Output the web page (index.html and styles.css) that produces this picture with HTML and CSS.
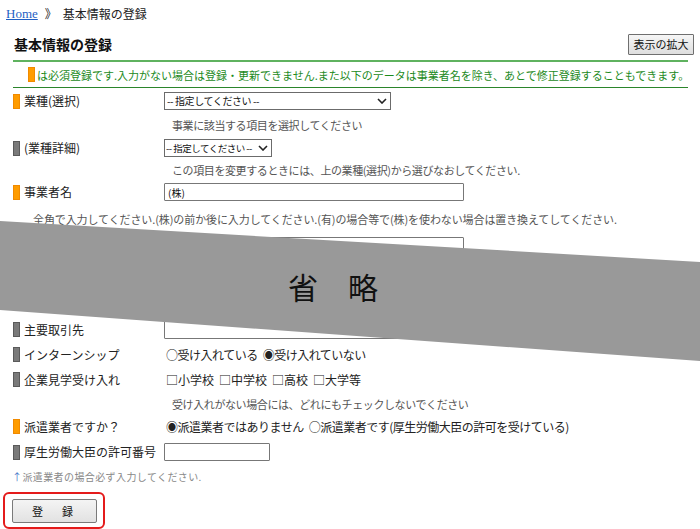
FILE: index.html
```html
<!DOCTYPE html>
<html lang="ja">
<head>
<meta charset="utf-8">
<title>基本情報の登録</title>
<link rel="stylesheet" href="styles.css">
</head>
<body>
<div class="page">
  <nav class="crumb"><a href="#" class="home">Home</a><span class="sep">》</span><span>基本情報の登録</span></nav>

  <div class="head">
    <h1 class="title">基本情報の登録</h1>
    <button class="zoom-btn" type="button">表示の拡大</button>
  </div>

  <p class="notice"><span class="mark req"></span>は必須登録です.入力がない場合は登録・更新できません.また以下のデータは事業者名を除き、あとで修正登録することもできます。</p>

  <form class="form">
    <div class="row r1">
      <div class="label"><span class="mark req"></span>業種(選択)</div>
      <div class="field">
        <span class="select-wrap w-wide"><select class="select"><option>-- 指定してください --</option></select><svg class="chev" width="10" height="6" viewBox="0 0 10 6"><path d="M1 1 L5 5 L9 1" fill="none" stroke="#222" stroke-width="1.6"/></svg></span>
      </div>
    </div>
    <div class="help h1r">事業に該当する項目を選択してください</div>
    <div class="row r2">
      <div class="label"><span class="mark opt"></span>(業種詳細)</div>
      <div class="field">
        <span class="select-wrap w-narrow"><select class="select small"><option>-- 指定してください --</option></select><svg class="chev" width="10" height="6" viewBox="0 0 10 6"><path d="M1 1 L5 5 L9 1" fill="none" stroke="#222" stroke-width="1.6"/></svg></span>
      </div>
    </div>
    <div class="help h2r">この項目を変更するときには、上の業種(選択)から選びなおしてください.</div>
    <div class="row r3">
      <div class="label"><span class="mark req"></span>事業者名</div>
      <div class="field"><input class="text w300" type="text" value="(株)"></div>
    </div>
    <div class="help wide h3r">全角で入力してください.(株)の前か後に入力してください.(有)の場合等で(株)を使わない場合は置き換えてしてください.</div>
    <div class="row r4">
      <div class="label"><span class="mark opt"></span>事業者名(カナ)</div>
      <div class="field"><input class="text w300" type="text"></div>
    </div>
    <div class="row r5">
      <div class="label"><span class="mark opt"></span>代表者名</div>
      <div class="field"><input class="text w300" type="text"></div>
    </div>
    <div class="row r6">
      <div class="label"><span class="mark opt"></span>所在地</div>
      <div class="field"><input class="text w300" type="text"></div>
    </div>
    <div class="row r7">
      <div class="label"><span class="mark opt"></span>主要取引先</div>
      <div class="field"><input class="text w300" type="text"></div>
    </div>
    <div class="row r8">
      <div class="label"><span class="mark opt"></span>インターンシップ</div>
      <div class="field choice"><span>○受け入れている</span><span>◉受け入れていない</span></div>
    </div>
    <div class="row r9">
      <div class="label"><span class="mark opt"></span>企業見学受け入れ</div>
      <div class="field choice checks"><span>□小学校</span><span>□中学校</span><span>□高校</span><span>□大学等</span></div>
    </div>
    <div class="help h4r">受け入れがない場合には、どれにもチェックしないでください</div>
    <div class="row r10">
      <div class="label"><span class="mark req"></span>派遣業者ですか？</div>
      <div class="field choice"><span>◉派遣業者ではありません</span><span>○派遣業者です(厚生労働大臣の許可を受けている)</span></div>
    </div>
    <div class="row r11">
      <div class="label"><span class="mark opt"></span>厚生労働大臣の許可番号</div>
      <div class="field"><input class="text w106" type="text"></div>
    </div>
    <p class="foot-note"><span class="arrow">↑</span>派遣業者の場合必ず入力してください.</p>
    <div class="submit-frame"><button class="submit" type="button">登　録</button></div>
  </form>

  <div class="omit"><span class="omit-text">省　略</span></div>
</div>
</body>
</html>
```

FILE: styles.css
```css
html, body {
  margin: 0;
  padding: 0;
  background: #fff;
}
body {
  font-family: "Noto Sans CJK JP", sans-serif;
  color: #222;
  width: 700px;
  height: 529px;
  overflow: hidden;
}
.page {
  position: relative;
  width: 700px;
  height: 529px;
}

/* breadcrumb */
.crumb {
  display: flex;
  align-items: center;
  height: 16px;
  padding: 6px 0 0 6px;
  font-size: 12px;
  line-height: 16px;
  color: #222;
}
.home {
  font-family: "Liberation Serif", serif;
  font-size: 13px;
  color: #1f5fc4;
  text-decoration: underline;
}
.sep {
  margin: 0 6px 0 7px;
}

/* heading */
.head {
  display: flex;
  align-items: center;
  justify-content: space-between;
  height: 28px;
  margin-top: 8px;
  padding: 0 6px 0 14px;
}
.title {
  margin: 0;
  font-size: 14px;
  line-height: 18px;
  font-weight: 700;
  color: #111;
}
.zoom-btn {
  width: 66px;
  height: 21px;
  padding: 0;
  font-family: "Noto Sans CJK JP", sans-serif;
  font-size: 11px;
  line-height: 19px;
  color: #111;
  background: linear-gradient(#f6f6f6, #dedede);
  border: 1px solid #6f6f6f;
  border-radius: 1px;
}

/* notice */
.notice {
  display: flex;
  align-items: center;
  width: 660px;
  height: 25px;
  margin: 2px 0 0 13px;
  padding: 0 0 0 15px;
  border-top: 2px solid #5fb25f;
  border-bottom: 1px solid #2b852b;
  font-size: 11px;
  line-height: 14px;
  letter-spacing: 0;
  color: #1c8a1c;
  white-space: nowrap;
}
.notice .mark {
  margin-right: 2px;
}

/* markers */
.mark {
  display: inline-block;
  width: 5px;
  height: 13px;
  margin-right: 4px;
  flex: none;
}
.mark.req {
  background: #ff9c00;
  border: 1px solid #f08a00;
}
.mark.opt {
  background: #7a7a7a;
  border: 1px solid #5a5a5a;
}

/* form */
.form {
  margin: 0;
  padding: 1px 0 0 13px;
}
.row {
  display: flex;
  align-items: center;
}
.label {
  display: flex;
  align-items: center;
  width: 151px;
  flex: none;
  font-size: 12px;
  line-height: 16px;
  color: #222;
  white-space: nowrap;
}
.field {
  display: flex;
  align-items: center;
}
.r1 { height: 24px; }
.r2 { height: 22px; }
.r3 { height: 22px; }
.r4 { height: 26px; }
.r5 { height: 28px; }
.r6 { height: 30px; }
.r7 { height: 25px; }
.r8 { height: 25px; }
.r9 { height: 25px; }
.r10 { height: 21px; }
.r11 { height: 30px; }

.help {
  display: flex;
  align-items: center;
  padding-left: 159px;
  font-size: 11px;
  line-height: 14px;
  letter-spacing: -0.4px;
  color: #555;
  white-space: nowrap;
}
.h1r { height: 24px; }
.h2r { height: 22px; }
.h3r {
  height: 30px;
  padding-left: 20px;
  padding-top: 2px;
  box-sizing: border-box;
  letter-spacing: -0.1px;
}
.h4r { height: 24px; }

.select-wrap {
  position: relative;
  display: flex;
  height: 18px;
}
.w-wide { width: 227px; }
.w-narrow { width: 108px; }
.select {
  -webkit-appearance: none;
  appearance: none;
  display: block;
  width: 100%;
  height: 18px;
  margin: 0;
  padding: 0 0 0 2px;
  border: 1px solid #6b6b6b;
  border-radius: 0;
  background: #fff;
  font-family: "Noto Sans CJK JP", sans-serif;
  font-size: 10px;
  line-height: 16px;
  letter-spacing: -0.4px;
  color: #111;
}
.select.small {
  padding-left: 1px;
  font-size: 9.5px;
  letter-spacing: -0.5px;
}
.chev {
  position: absolute;
  right: 4px;
  top: 6px;
}

.text {
  box-sizing: border-box;
  height: 18px;
  margin: 0;
  padding: 0 3px;
  border: 1px solid #777;
  border-radius: 1px;
  background: #fff;
  font-family: "Noto Sans CJK JP", sans-serif;
  font-size: 10px;
  color: #111;
}
.w300 { width: 300px; }
.w106 { width: 106px; }

.choice {
  gap: 5px;
  padding-left: 2px;
  font-size: 12px;
  line-height: 16px;
  letter-spacing: -0.5px;
  color: #222;
  white-space: nowrap;
}
.choice.checks {
  letter-spacing: 0;
}

.foot-note {
  display: flex;
  align-items: center;
  height: 20px;
  margin: 0 0 0 -1px;
  font-size: 10px;
  line-height: 14px;
  letter-spacing: 0.4px;
  color: #888;
}
.arrow {
  color: #4a78c8;
}

.submit-frame {
  display: inline-flex;
  margin: 5px 0 0 -10px;
  padding: 5px 6px 4px 7px;
  border: 2px solid #e41b1b;
  border-radius: 6px;
}
.submit {
  width: 85px;
  height: 24px;
  padding: 0;
  font-family: "Noto Sans CJK JP", sans-serif;
  font-size: 11px;
  letter-spacing: 4px;
  color: #111;
  background: linear-gradient(#f4f4f4, #e2e2e2);
  border: 1px solid #7a7a7a;
  border-radius: 2px;
}

/* omitted band overlay */
.omit {
  position: absolute;
  left: 0;
  top: 221px;
  width: 700px;
  height: 140px;
  background: #999;
  clip-path: polygon(0 0, 700px 41px, 700px 140px, 0 89px);
  display: flex;
  justify-content: center;
  box-sizing: border-box;
  padding: 47px 34px 0 0;
}
.omit-text {
  font-size: 30px;
  line-height: 36px;
  color: #111;
  white-space: nowrap;
}
```
